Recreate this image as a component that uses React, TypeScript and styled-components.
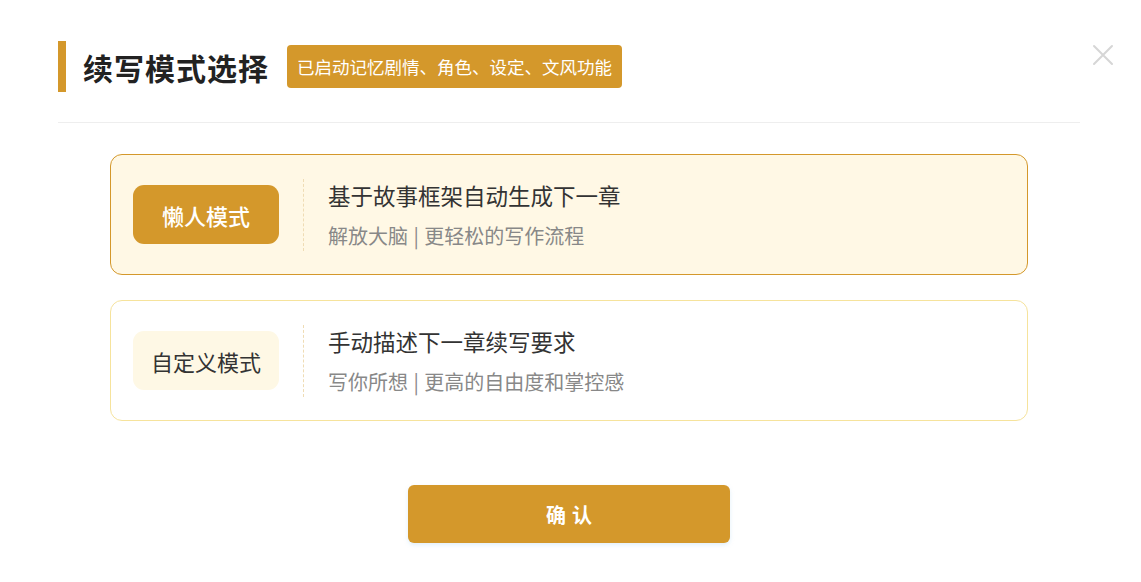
import React, { useState } from "react";
import styled, { createGlobalStyle, css } from "styled-components";

const GOLD = "#d4982b";

const GlobalStyle = createGlobalStyle`
  html, body {
    margin: 0;
    padding: 0;
    background: #ffffff;
  }
  body {
    font-family: "Noto Sans CJK SC", "Noto Sans", sans-serif;
    color: #333;
  }
`;

const Modal = styled.div`
  position: relative;
  width: 1141px;
  height: 582px;
  box-sizing: border-box;
  padding: 41px 61px 0 58px;
  background: #fff;
`;

const Header = styled.div`
  display: flex;
  align-items: center;
  height: 51px;
  gap: 18px;
`;

const TitleBlock = styled.div`
  display: flex;
  align-items: center;
  height: 51px;
  border-left: 8px solid ${GOLD};
  padding-left: 17px;
`;

const Title = styled.h1`
  margin: 0;
  font-size: 30px;
  font-weight: 700;
  color: #222;
  letter-spacing: 1px;
  line-height: 1;
`;

const Badge = styled.span`
  display: inline-flex;
  align-items: center;
  height: 43px;
  padding: 0 10px;
  border-radius: 4px;
  background: ${GOLD};
  color: #fff;
  font-size: 17.5px;
  line-height: 1;
`;

const CloseButton = styled.button`
  position: absolute;
  top: 43px;
  right: 26px;
  width: 24px;
  height: 24px;
  padding: 0;
  border: none;
  background: transparent;
  cursor: pointer;
  display: flex;
  align-items: center;
  justify-content: center;
`;

const Divider = styled.div`
  height: 1px;
  background: #eeeeee;
  margin-top: 30px;
`;

const CardList = styled.div`
  display: flex;
  flex-direction: column;
  gap: 25px;
  margin: 31px 52px 0;
`;

const Card = styled.div<{ $active: boolean }>`
  display: flex;
  align-items: center;
  box-sizing: border-box;
  height: 121px;
  padding-left: 22px;
  border-radius: 12px;
  cursor: pointer;
  ${(p) =>
    p.$active
      ? css`
          border: 1px solid ${GOLD};
          background: #fff8e5;
        `
      : css`
          border: 1px solid #f6e39c;
          background: #ffffff;
        `}
`;

const ModeTag = styled.div<{ $active: boolean }>`
  width: 146px;
  height: 59px;
  border-radius: 11px;
  display: flex;
  align-items: center;
  justify-content: center;
  font-size: 22px;
  ${(p) =>
    p.$active
      ? css`
          background: ${GOLD};
          color: #fff;
          font-weight: 500;
        `
      : css`
          background: #fef8e5;
          color: #333;
          font-weight: 400;
        `}
`;

const Separator = styled.div`
  align-self: center;
  height: 72px;
  margin: 0 24px;
  border-left: 1px dashed #efdcb4;
`;

const CardText = styled.div`
  display: flex;
  flex-direction: column;
  gap: 13px;
`;

const CardTitle = styled.div`
  font-size: 22.5px;
  color: #333;
  line-height: 30px;
`;

const CardSub = styled.div`
  font-size: 20px;
  color: #888;
  line-height: 26px;
  word-spacing: 1px;
`;

const Footer = styled.div`
  display: flex;
  justify-content: center;
  margin-top: 64px;
`;

const ConfirmButton = styled.button`
  width: 322px;
  height: 58px;
  border: none;
  border-radius: 6px;
  background: ${GOLD};
  color: #fff;
  font-family: "Noto Sans CJK SC", sans-serif;
  font-size: 20px;
  font-weight: 700;
  letter-spacing: 6px;
  text-indent: 6px;
  cursor: pointer;
  box-shadow: 0 2px 4px rgba(170, 210, 240, 0.35);
`;

const modes = [
  {
    key: "lazy",
    name: "懒人模式",
    title: "基于故事框架自动生成下一章",
    sub: "解放大脑 | 更轻松的写作流程",
  },
  {
    key: "custom",
    name: "自定义模式",
    title: "手动描述下一章续写要求",
    sub: "写你所想 | 更高的自由度和掌控感",
  },
];

export default function App() {
  const [selected, setSelected] = useState("lazy");
  return (
    <>
      <GlobalStyle />
      <Modal>
        <Header>
          <TitleBlock>
            <Title>续写模式选择</Title>
          </TitleBlock>
          <Badge>已启动记忆剧情、角色、设定、文风功能</Badge>
        </Header>
        <CloseButton aria-label="关闭">
          <svg width="22" height="22" viewBox="0 0 22 22">
            <path
              d="M2 2 L20 20 M20 2 L2 20"
              stroke="#d6d6d6"
              strokeWidth="2"
              strokeLinecap="round"
            />
          </svg>
        </CloseButton>
        <Divider />
        <CardList>
          {modes.map((m) => {
            const active = selected === m.key;
            return (
              <Card key={m.key} $active={active} onClick={() => setSelected(m.key)}>
                <ModeTag $active={active}>{m.name}</ModeTag>
                <Separator />
                <CardText>
                  <CardTitle>{m.title}</CardTitle>
                  <CardSub>{m.sub}</CardSub>
                </CardText>
              </Card>
            );
          })}
        </CardList>
        <Footer>
          <ConfirmButton>确认</ConfirmButton>
        </Footer>
      </Modal>
    </>
  );
}
